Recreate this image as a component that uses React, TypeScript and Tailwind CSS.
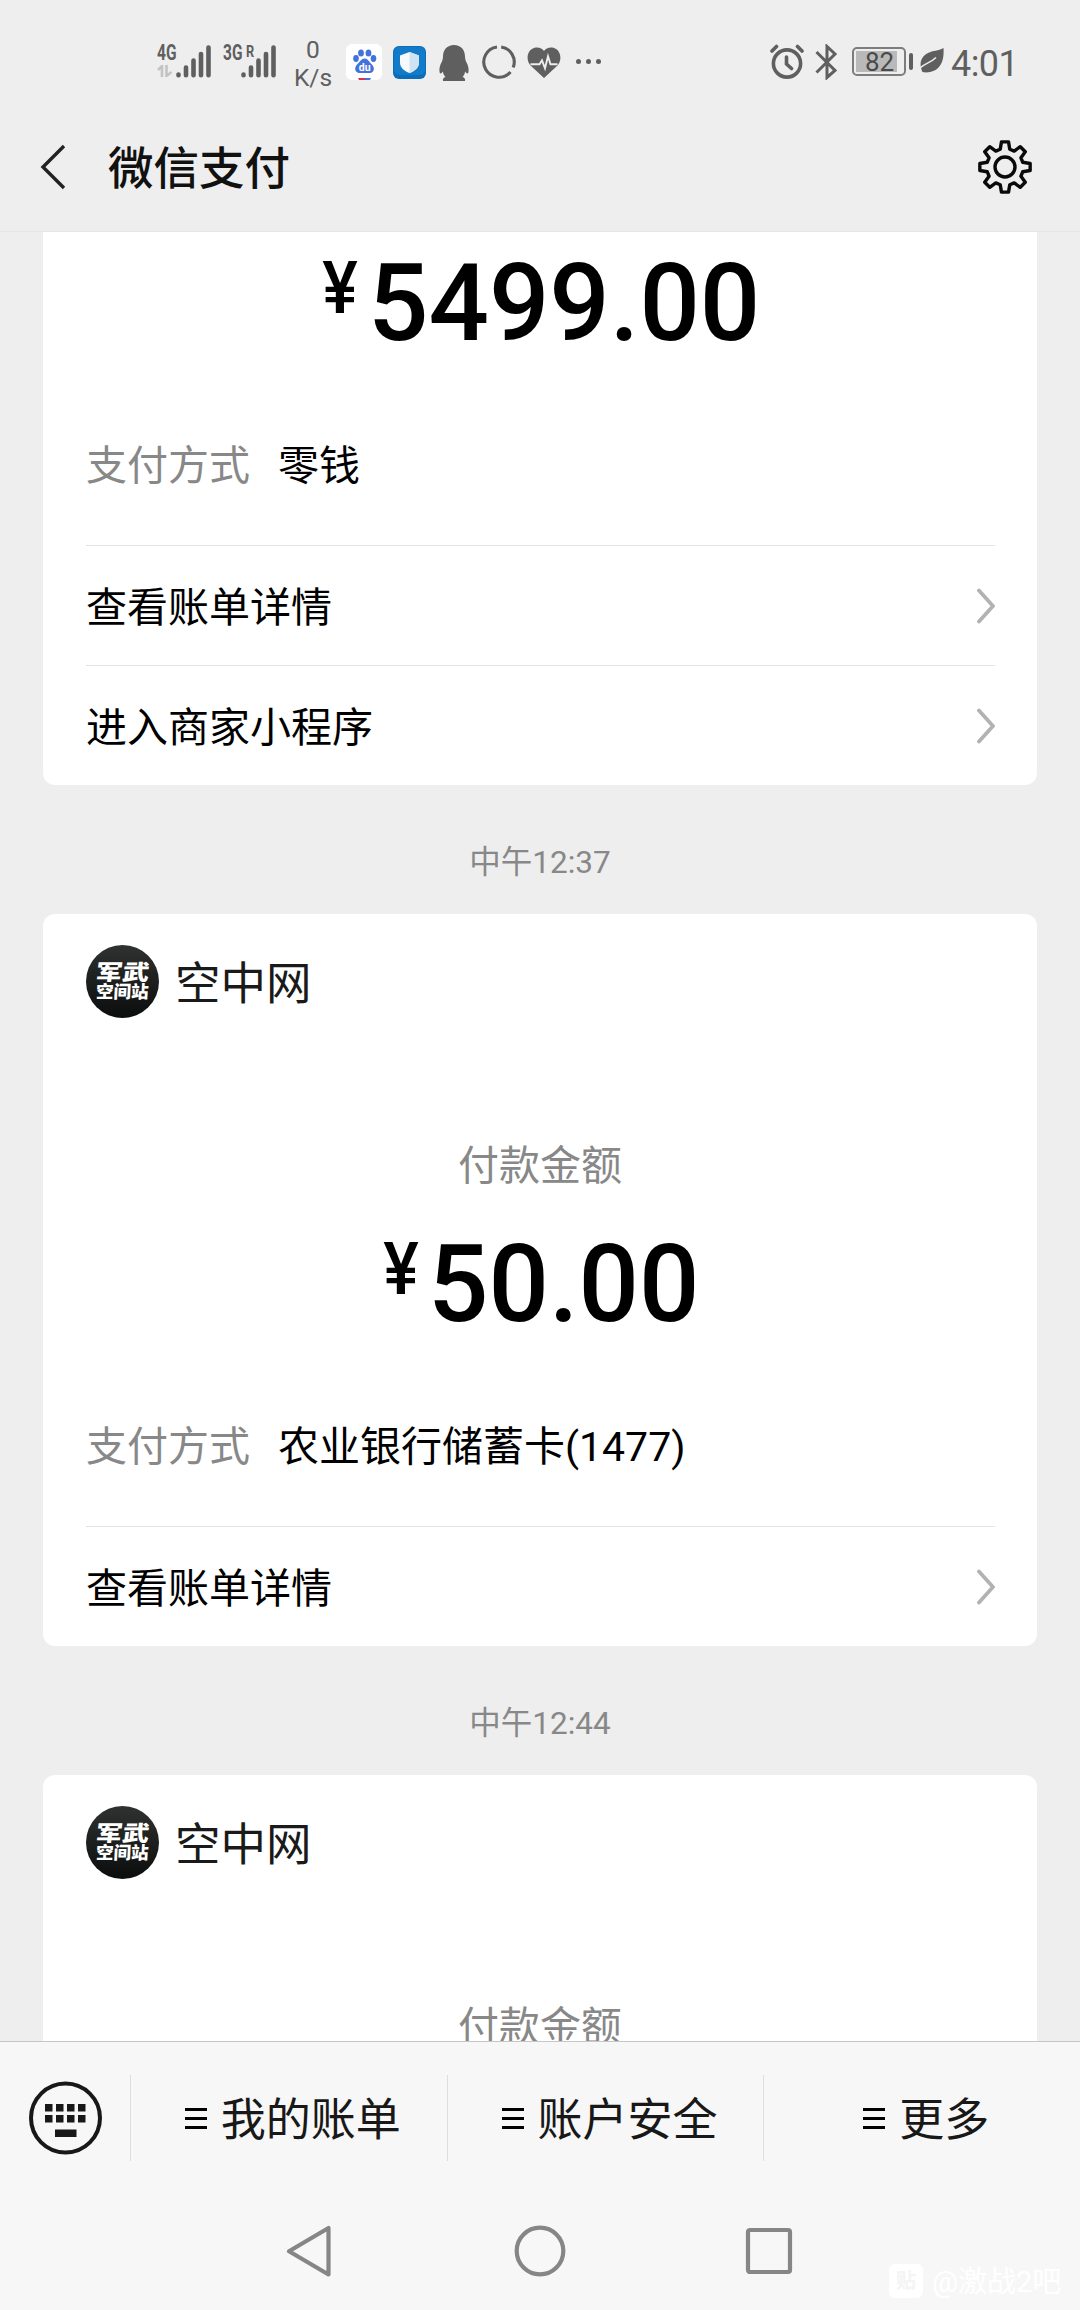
import type { ReactNode } from 'react';

type CardProps = {
  merchant?: string;
  amount?: string;
  method?: string;
  links?: string[];
};

const TEETH = 8;

// contorno da engrenagem: base e topo de cada dente
const gearPoints = Array.from({ length: TEETH }, (_, i) => {
  const center = (i * 360) / TEETH;
  return [
    [-15, 18.4],
    [-8, 25.4],
    [8, 25.4],
    [15, 18.4],
  ]
    .map(([offset, radius]) => {
      const angle = ((center + offset) * Math.PI) / 180;
      return `${(28 + radius * Math.sin(angle)).toFixed(2)},${(28 - radius * Math.cos(angle)).toFixed(2)}`;
    })
    .join(' ');
}).join(' ');

const GearIcon = () => (
  <svg width="56" height="56" viewBox="0 0 56 56" fill="none" stroke="#0a0a0a" strokeWidth="3.4" strokeLinejoin="round">
    <polygon points={gearPoints} />
    <circle cx="28" cy="28" r="10" />
  </svg>
);

const SignalBars = () => (
  <svg width="35" height="33" viewBox="0 0 35 33" stroke="#5f5f5f" strokeWidth="4.6" strokeLinecap="round">
    <path d="M2.5 29.5v.8M10 22.5v7.8M17.5 15.5v14.8M25 9v21.3M32.5 2.5v27.8" />
  </svg>
);

const BaiduIcon = () => (
  <svg width="36" height="36" viewBox="0 0 36 36">
    <rect width="36" height="36" rx="6" fill="#fff" />
    <g fill="#4272dc">
      <ellipse cx="10" cy="14.5" rx="2.8" ry="3.4" />
      <ellipse cx="15" cy="9" rx="2.9" ry="3.6" />
      <ellipse cx="22.5" cy="9" rx="2.9" ry="3.6" />
      <ellipse cx="27.5" cy="14.5" rx="2.8" ry="3.4" />
      <path d="M18.7 14.5c3.3 0 4.3 3.3 6.8 5.5 4 3.5 2.5 9-1.5 9H13.5c-4.5 0-6-5.5-2-9 2.5-2.2 3.800-5.500 7.200-5.500z" />
    </g>
    <text x="18.7" y="27.3" textAnchor="middle" fontSize="10.5" fontWeight="700" fill="#fff" fontFamily="Roboto, sans-serif">
      du
    </text>
    <path d="M12 34h7v2h-6z" fill="#d0364c" />
    <path d="M19 34h6l-1 2h-5z" fill="#4272dc" />
  </svg>
);

const ShieldIcon = () => (
  <svg width="33" height="33" viewBox="0 0 33 33">
    <rect width="33" height="33" rx="6" fill="#0b6cba" />
    <rect x="1" y="1" width="31" height="28" rx="5" fill="#127bc9" />
    <path d="M16.5 6l9.5 3.5v7c0 5-4 8.500-9.500 10.500C11 25 7 21.500 7 16.500v-7z" fill="#f6fafd" />
    <path d="M16.5 6l9.5 3.5v7c0 5-4 8.500-9.500 10.500z" fill="#cfe3f3" />
  </svg>
);

const PenguinIcon = () => (
  <svg width="30" height="36" viewBox="0 0 30 36" fill="#5f5f5f">
    <path d="M15 0c7 0 11 5 11 11.500 0 2 .5 3 1 5 2 3.500 3 7 2.500 10-.2 2.500-1.500 2.500-3.500 0 0 2-1 4-2.500 5.500 2 .7 3 1.800 2.500 4H4c-.5-2.200.5-3.300 2.500-4C5 30.500 4 28.500 4 26.500c-2 2.500-3.300 2.500-3.500 0-.5-3 .5-6.500 2.500-10 .5-2 1-3 1-5C4 5 8 0 15 0z" />
  </svg>
);

const RingIcon = () => (
  <svg width="34" height="34" viewBox="0 0 34 34" fill="none" stroke="#5f5f5f" strokeWidth="3.1">
    <path d="M19.2 2A15.200 15.200 0 0 1 31.200 22.500M28.500 27A15.200 15.200 0 1 1 15 2" />
  </svg>
);

const HeartIcon = () => (
  <svg width="34" height="31" viewBox="0 0 34 31">
    <path d="M17 31L3.500 18.500C-1.500 13 0 3 7.500.8 11.500-.3 15 1.200 17 4c2-2.800 5.500-4.300 9.500-3.200C34 3 35.500 13 30.500 18.500z" fill="#5f5f5f" />
    <path d="M3.500 17.300h9l2.500-4 3 8 3-12 2.500 8h7" fill="none" stroke="#eee" strokeWidth="1.9" />
  </svg>
);

const AlarmIcon = () => (
  <svg width="34" height="35" viewBox="0 0 34 35" fill="none" stroke="#5f5f5f" strokeWidth="3.6" strokeLinecap="round">
    <circle cx="17" cy="19.5" r="13.6" />
    <path d="M16.500 13v7l5 4.500M2 7l4.500-4.500M32 7l-4.500-4.500" />
  </svg>
);

const BluetoothIcon = () => (
  <svg width="23" height="36" viewBox="0 0 23 36" fill="none" stroke="#5f5f5f" strokeWidth="3">
    <path d="M1.500 8L20 26.500 12 33.500V2.500l8 7.500L1.500 28.500" />
  </svg>
);

const LeafIcon = () => (
  <svg width="24" height="25" viewBox="0 0 24 25">
    <path d="M23.500 0c.8 11-2 19-9 22.500-4 2-9 2.500-12 1.500C-1 17 0 9 8 5c5-2.500 10-2 15.500-5z" fill="#5f5f5f" />
    <path d="M0 20C5 15.500 11 14.500 16 9.500" fill="none" stroke="#eee" strokeWidth="1.5" />
  </svg>
);

const StatusBar = () => (
  <div className="flex h-[124px] items-start text-[#5f5f5f]">
    <div className="ml-[157px] mt-[45px] flex h-[34px] w-[54px]">
      <div className="flex w-[19px] flex-col">
        <span className="w-0 origin-left scale-x-[0.72] text-[21.5px] font-bold leading-[16px]">4G</span>
        <svg className="mt-[4px]" width="16" height="12" viewBox="0 0 16 12" fill="none" stroke="#c4c4c4" strokeWidth="2.6">
          <path d="M1 5l4-4v11M9.500 0v11l5-4" />
        </svg>
      </div>
      <SignalBars />
    </div>
    <div className="relative ml-[12px] mt-[45px] flex h-[34px] w-[54px]">
      <span className="w-0 origin-left scale-x-[0.72] text-[21.5px] font-bold leading-[16px]">3G</span>
      <span className="absolute left-[23px] top-0 origin-left scale-x-[0.75] text-[17px] font-bold leading-[13px]">R</span>
      <div className="ml-[18px]">
        <SignalBars />
      </div>
    </div>
    <div className="ml-[16px] mt-[36px] w-[40px] text-center text-[24.5px] leading-[28px]">
      <div>0</div>
      <div>K/s</div>
    </div>
    <div className="ml-[13px] mt-[44px]"><BaiduIcon /></div>
    <div className="ml-[11px] mt-[46px]"><ShieldIcon /></div>
    <div className="ml-[13px] mt-[45px]"><PenguinIcon /></div>
    <div className="ml-[13px] mt-[45px]"><RingIcon /></div>
    <div className="ml-[11px] mt-[47px]"><HeartIcon /></div>
    <div className="ml-[15px] mt-[59px] flex gap-[5px]">
      <i className="size-[5px] rounded-full bg-[#5f5f5f]" />
      <i className="size-[5px] rounded-full bg-[#5f5f5f]" />
      <i className="size-[5px] rounded-full bg-[#5f5f5f]" />
    </div>
    <div className="ml-auto mt-[44px]"><AlarmIcon /></div>
    <div className="ml-[11px] mt-[44px]"><BluetoothIcon /></div>
    <div className="ml-[14px] mt-[47px] flex h-[29px] w-[54px] rounded-[5px] border-2 border-[#7d7d7d] p-[2px]">
      <div className="flex h-full w-[41px] items-center justify-center bg-[#b9b9b9] pl-[6px] text-[26px] leading-none text-[#4a4a4a]">
        82
      </div>
    </div>
    <i className="ml-[3px] mt-[53px] h-[17px] w-[4px] rounded-sm bg-[#5f5f5f]" />
    <div className="ml-[7px] mt-[48px]"><LeafIcon /></div>
    <div className="ml-[7px] mr-[63px] mt-[46px] w-[66px] whitespace-nowrap text-[36px] leading-[36px] tracking-[-0.6px]">4:01</div>
  </div>
);

const Header = () => (
  <div className="flex h-[108px] items-start border-b border-[#e6e6e6] pt-[15px]">
    <svg className="ml-[40px] mt-[5px]" width="26" height="46" viewBox="0 0 26 46" fill="none" stroke="#222" strokeWidth="3.4">
      <path d="M24 2L3 23l21 21" />
    </svg>
    <h1 className="ml-[42px] mt-[3px] text-[45.5px] font-medium leading-[56px] text-[#111]">微信支付</h1>
    <div className="ml-auto mr-[47px]">
      <GearIcon />
    </div>
  </div>
);

const Avatar = () => (
  <div className="flex size-[73px] flex-col items-center justify-center rounded-full bg-linear-to-b from-[#303231] to-[#0c0d0d] font-black text-white">
    <span className="-skew-x-6 scale-x-[1.25] whitespace-nowrap text-[21.5px] leading-[20px]">军武</span>
    <span className="-skew-x-3 whitespace-nowrap text-[17.5px] leading-[18px]">空间站</span>
  </div>
);

const Row = ({ children }: { children: ReactNode }) => (
  <div className="ml-[43px] mr-[42px] flex h-[120px] items-center justify-between border-t border-[#e3e3e3]">
    <span className="pt-[5px]">{children}</span>
    <svg width="18" height="36" viewBox="0 0 18 36" fill="none" stroke="#b2b2b2" strokeWidth="3.8" strokeLinecap="round">
      <path d="M2 2.500L16 18 2 33.500" />
    </svg>
  </div>
);

const Card = ({ merchant, amount, method, links = [] }: CardProps) => (
  <div className={merchant ? 'rounded-xl bg-white' : 'rounded-b-xl bg-white'}>
    {merchant && (
      <div className="h-[299px] pt-[31px]">
        <div className="ml-[43px] flex h-[73px] items-center gap-[16px]">
          <Avatar />
          <span className="pt-[7px] text-[45.5px] leading-[60px] text-[#1a1a1a]">{merchant}</span>
        </div>
        <div className="mt-[118px] text-center leading-[60px] text-[#888]">付款金额</div>
      </div>
    )}
    {amount && (
      <div className="flex h-[147px] justify-center pt-[17px] font-medium">
        <span className="mr-[8px] mt-[4px] w-[40px] scale-x-[0.93] text-center text-[72px] leading-[72px]">¥</span>
        <span className="-mx-[3px] scale-x-[0.985] text-[108px] leading-[108px]">{amount}</span>
      </div>
    )}
    {method && (
      <div className="ml-[43px] flex h-[166px] gap-[28px] pt-[57px] leading-[60px]">
        <span className="text-[#888]">支付方式</span>
        <span>{method}</span>
      </div>
    )}
    {links.map((link) => (
      <Row key={link}>{link}</Row>
    ))}
  </div>
);

const TimeLabel = ({ children }: { children: ReactNode }) => (
  <div className="h-[129px] pt-[62px] text-center text-[31.5px] leading-none text-[#888]">{children}</div>
);

const menus = ['我的账单', '账户安全', '更多'];

const MenuBar = () => (
  <div className="flex h-[157px] items-center border-t border-[#c6c6c6] pb-[5px]">
    <svg className="ml-[29px] mr-[28px]" width="73" height="74" viewBox="0 0 73 74">
      <circle cx="36.5" cy="37" r="34.5" fill="none" stroke="#181818" strokeWidth="4" />
      <path
        d="M16 23h7.500v7.500H16zM27 23h7.500v7.500H27zM38 23h7.500v7.500H38zM49 23h7.500v7.500H49zM16 34h7.500v7.500H16zM27 34h7.500v7.500H27zM38 34h7.500v7.500H38zM49 34h7.500v7.500H49zM26 48.500h21.500v7.500H26z"
        fill="#181818"
      />
    </svg>
    {menus.map((menu) => (
      <div key={menu} className="flex h-[86px] flex-1 items-center justify-center gap-[14px] border-l border-[#dedede] pl-[8px]">
        <div className="flex w-[22px] flex-col gap-[6px] pt-[2px]">
          <i className="h-[3px] bg-black" />
          <i className="h-[3px] bg-black" />
          <i className="h-[3px] bg-black" />
        </div>
        <span className="pt-[6px] text-[45px] leading-[60px] text-[#181818]">{menu}</span>
      </div>
    ))}
  </div>
);

const SystemNav = () => (
  <div className="relative flex h-[112px] items-start pt-[26px]">
    <svg className="ml-[285px]" width="48" height="54" viewBox="0 0 48 54" fill="none" stroke="#868686" strokeWidth="4.2" strokeLinejoin="round">
      <path d="M43.500 4v46.500L4 27.300z" />
    </svg>
    <svg className="ml-[180px]" width="54" height="54" viewBox="0 0 54 54" fill="none" stroke="#868686" strokeWidth="4.2">
      <circle cx="27" cy="27" r="23.3" />
    </svg>
    <svg className="ml-[175px]" width="54" height="54" viewBox="0 0 54 54" fill="none" stroke="#868686" strokeWidth="4.2">
      <rect x="6" y="6" width="42" height="42" rx="2" />
    </svg>
    <div className="absolute left-[889px] top-[63px] flex items-center gap-[9px] text-white">
      <div className="flex size-[34px] items-center justify-center rounded-[6px] bg-white text-[20px] font-bold leading-none text-[#f4f4f4]">贴</div>
      <span className="whitespace-nowrap pt-[2px] text-[29px] leading-[38px]">@激战2吧</span>
    </div>
  </div>
);

const App = () => {
  return (
    <div className="flex h-[2310px] w-[1080px] flex-col overflow-hidden bg-[#eee] font-['Roboto','Noto_Sans_CJK_SC',sans-serif] text-[41px] leading-none text-black">
      <StatusBar />
      <Header />
      <div className="h-[1809px] overflow-hidden px-[43px]">
        <Card amount="5499.00" method="零钱" links={['查看账单详情', '进入商家小程序']} />
        <TimeLabel>中午12:37</TimeLabel>
        <Card merchant="空中网" amount="50.00" method="农业银行储蓄卡(1477)" links={['查看账单详情']} />
        <TimeLabel>中午12:44</TimeLabel>
        <Card merchant="空中网" />
      </div>
      <div className="bg-[#f7f7f7]">
        <MenuBar />
        <SystemNav />
      </div>
    </div>
  );
};

export default App;
